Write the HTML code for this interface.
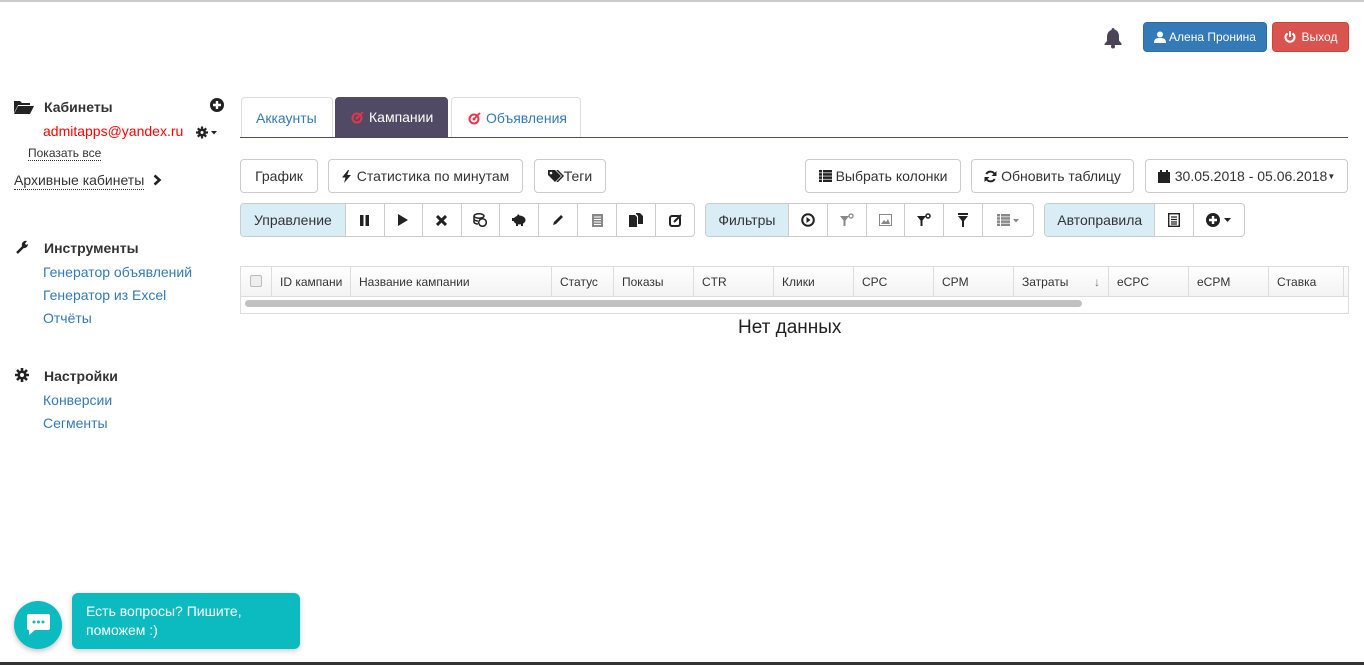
<!DOCTYPE html>
<html><head><meta charset="utf-8"><style>
*{box-sizing:border-box;margin:0;padding:0}
body{width:1364px;height:665px;background:#fff;font-family:"Liberation Sans",Arial,sans-serif;font-size:14px;color:#333;position:relative;overflow:hidden}
.a{position:absolute}
.btn{position:absolute;border:1px solid #ccc;border-radius:4px;background:#fff;display:flex;align-items:center;justify-content:center;font-size:14px;color:#333;white-space:nowrap}
.g{position:absolute;height:34px;border:1px solid #ccc;border-radius:4px;display:flex;overflow:hidden;background:#fff}
.g>div{border-left:1px solid #ccc;display:flex;align-items:center;justify-content:center;font-size:14px;color:#333}
.g>div:first-child{border-left:none}
.g>.lb{background:#d9edf7}
.th{position:absolute;top:267px;height:29px;border-left:1px solid #ddd;font-size:12px;font-weight:bold;color:#333;padding:8px 8px;white-space:nowrap;overflow:hidden;background:linear-gradient(#fff,#f3f3f3)}
.lnk{color:#337ab7;font-size:14px}
.h{font-weight:bold;font-size:14px;color:#333}
</style></head><body>
<div class="a" style="left:0;top:0;width:1364px;height:2px;background:#ccc"></div>
<div class="a" style="left:0;top:662px;width:1364px;height:3px;background:#333"></div>

<svg class="a" style="left:1103px;top:27px" width="20" height="22" viewBox="0 0 20 22"><path d="M10 1c1 0 1.5.7 1.5 1.5 3 .8 4.5 3.5 4.5 7v4l2.5 3v1.5h-17V17l2.5-3v-4c0-3.5 1.5-6.2 4.5-7C8.5 1.7 9 1 10 1z" fill="#4a4456"/><circle cx="10" cy="19.5" r="2" fill="#4a4456"/></svg>
<div class="btn" style="left:1143px;top:22px;width:124px;height:30px;background:#337ab7;border-color:#2e6da4;color:#fff;font-size:12px">
<svg width="12" height="12" viewBox="0 0 12 12" style="margin-right:3px"><circle cx="6" cy="3.5" r="3" fill="#fff"/><path d="M0 12c0-4 2-5 6-5s6 1 6 5z" fill="#fff"/></svg>Алена Пронина</div>
<div class="btn" style="left:1272px;top:22px;width:77px;height:30px;background:#d9534f;border-color:#d43f3a;color:#fff;font-size:12px">
<svg width="12" height="12" viewBox="0 0 12 12" style="margin-right:6px"><path d="M3.5 2.5A4.5 4.5 0 1 0 8.5 2.5" fill="none" stroke="#fff" stroke-width="2"/><path d="M6 0v6" stroke="#fff" stroke-width="2"/></svg>Выход</div>

<svg class="a" style="left:14px;top:100px" width="20" height="14" viewBox="0 0 20 14"><path d="M0 1h6l2 2h8v2H4L0 13z" fill="#222"/><path d="M4 6h16l-4 8H0z" fill="#222"/></svg>
<div class="a h" style="left:44px;top:99px">Кабинеты</div>
<svg class="a" style="left:210px;top:98px" width="14" height="14" viewBox="0 0 14 14"><circle cx="7" cy="7" r="7" fill="#222"/><path d="M7 3v8M3 7h8" stroke="#fff" stroke-width="2.4"/></svg>
<div class="a" style="left:43px;top:123px;color:#f00;font-size:14px">admitapps@yandex.ru</div>
<svg class="a" style="left:196px;top:126px" width="22" height="13" viewBox="0 0 22 13"><circle cx="6" cy="6.5" r="4" fill="#222"/><g stroke="#222" stroke-width="2.2"><path d="M6 0.5v12M0 6.5h12M1.8 2.3l8.4 8.4M10.2 2.3l-8.4 8.4"/></g><circle cx="6" cy="6.5" r="1.5" fill="#fff"/><path d="M15 5h6l-3 3.5z" fill="#222"/></svg>
<div class="a" style="left:28px;top:146px;font-size:12px;color:#333;border-bottom:1px dotted #333;line-height:14px">Показать все</div>
<div class="a" style="left:14px;top:172px;font-size:14px;color:#333;border-bottom:1px dotted #333;line-height:17px">Архивные кабинеты</div>
<svg class="a" style="left:153px;top:174px" width="9" height="12" viewBox="0 0 9 12"><path d="M1.5 1.5l5 4.5-5 4.5" fill="none" stroke="#222" stroke-width="2.6"/></svg>

<svg class="a" style="left:15px;top:240px" width="14" height="14" viewBox="0 0 14 14"><path d="M2 13l6-6" stroke="#222" stroke-width="2.5"/><path d="M7 6a4 4 0 0 1 5-5l-2 2.5 1 1.5 2-1A4 4 0 0 1 8 8z" fill="#222"/></svg>
<div class="a h" style="left:44px;top:240px">Инструменты</div>
<div class="a lnk" style="left:43px;top:264px">Генератор объявлений</div>
<div class="a lnk" style="left:43px;top:287px">Генератор из Excel</div>
<div class="a lnk" style="left:43px;top:310px">Отчёты</div>
<svg class="a" style="left:15px;top:368px" width="14" height="14" viewBox="0 0 14 14"><circle cx="7" cy="7" r="4.5" fill="#222"/><g stroke="#222" stroke-width="2.6"><path d="M7 0v14M0 7h14M2 2l10 10M12 2L2 12"/></g><circle cx="7" cy="7" r="2" fill="#fff"/></svg>
<div class="a h" style="left:44px;top:368px">Настройки</div>
<div class="a lnk" style="left:43px;top:392px">Конверсии</div>
<div class="a lnk" style="left:43px;top:415px">Сегменты</div>

<div class="a" style="left:240px;top:137px;width:1108px;height:1px;background:#514a65"></div>
<div class="a" style="left:241px;top:97px;width:92px;height:40px;border:1px solid #ddd;border-bottom:none;border-radius:4px 4px 0 0;color:#337ab7;padding:12px 14px">Аккаунты</div>
<div class="a" style="left:335px;top:97px;width:113px;height:41px;background:#514a65;border-radius:4px 4px 0 0;color:#fff;padding:12px 0 0 16px;display:flex"><svg width="13" height="13" viewBox="0 0 13 13" style="margin:2px 5px 0 0"><circle cx="6" cy="7" r="4.5" fill="none" stroke="#e8334a" stroke-width="2"/><circle cx="6" cy="7" r="1.5" fill="#e8334a"/><path d="M6 7l6-6" stroke="#e8334a" stroke-width="1.8"/></svg>Кампании</div>
<div class="a" style="left:451px;top:97px;width:130px;height:40px;border:1px solid #ddd;border-bottom:none;border-radius:4px 4px 0 0;color:#337ab7;padding:12px 0 0 16px;display:flex"><svg width="13" height="13" viewBox="0 0 13 13" style="margin:2px 5px 0 0"><circle cx="6" cy="7" r="4.5" fill="none" stroke="#e8334a" stroke-width="2"/><circle cx="6" cy="7" r="1.5" fill="#e8334a"/><path d="M6 7l6-6" stroke="#e8334a" stroke-width="1.8"/></svg>Объявления</div>

<div class="btn" style="left:240px;top:159px;width:78px;height:34px">График</div>
<div class="btn" style="left:328px;top:159px;width:195px;height:34px"><svg width="9" height="13" viewBox="0 0 9 13" style="margin-right:6px"><path d="M6 0L0 7.5h3.5L2 13l7-8H5.3L7 0z" fill="#222"/></svg>Статистика по минутам</div>
<div class="btn" style="left:534px;top:159px;width:72px;height:34px"><svg width="16" height="12" viewBox="0 0 16 12"><path d="M0 0h7l6 6-6 6-7-7z" fill="#222"/><circle cx="3" cy="3" r="1.3" fill="#fff"/><path d="M9 0l6 6-6 6" fill="none" stroke="#222" stroke-width="1.5"/></svg>Теги</div>
<div class="btn" style="left:805px;top:159px;width:156px;height:34px"><svg width="13" height="12" viewBox="0 0 13 12" style="margin-right:4px"><g fill="#222"><rect x="0" y="0" width="3" height="2.5"/><rect x="4" y="0" width="9" height="2.5"/><rect x="0" y="3.2" width="3" height="2.5"/><rect x="4" y="3.2" width="9" height="2.5"/><rect x="0" y="6.4" width="3" height="2.5"/><rect x="4" y="6.4" width="9" height="2.5"/><rect x="0" y="9.6" width="3" height="2.4"/><rect x="4" y="9.6" width="9" height="2.4"/></g></svg>Выбрать колонки</div>
<div class="btn" style="left:971px;top:159px;width:163px;height:34px"><svg width="13" height="13" viewBox="0 0 13 13" style="margin-right:4px"><path d="M11 5A4.8 4.8 0 0 0 2.3 4M2 8a4.8 4.8 0 0 0 8.7 1" fill="none" stroke="#222" stroke-width="2"/><path d="M12.5 1v5h-5zM0.5 12V7h5z" fill="#222"/></svg>Обновить таблицу</div>
<div class="btn" style="left:1145px;top:159px;width:203px;height:34px"><svg width="12" height="13" viewBox="0 0 12 13" style="margin-right:5px"><rect x="0" y="2" width="12" height="11" fill="#222"/><rect x="2" y="0" width="2" height="3" fill="#222"/><rect x="8" y="0" width="2" height="3" fill="#222"/></svg>30.05.2018 - 05.06.2018<span style="font-size:8px">▼</span></div>

<div class="g" style="left:240px;top:203px;width:455px">
<div class="lb" style="width:104px">Управление</div>
<div style="width:39px"><svg width="9" height="11"><rect x="0" y="0" width="3.5" height="11" fill="#222"/><rect x="5.5" y="0" width="3.5" height="11" fill="#222"/></svg></div>
<div style="width:38px"><svg width="10" height="12"><path d="M0 0l10 6-10 6z" fill="#222"/></svg></div>
<div style="width:39px"><svg width="11" height="11"><path d="M1 1l9 9M10 1l-9 9" stroke="#222" stroke-width="3"/></svg></div>
<div style="width:39px"><svg width="14" height="14" viewBox="0 0 14 14"><ellipse cx="6" cy="3" rx="5" ry="2.2" fill="none" stroke="#222" stroke-width="1.5"/><path d="M1 3v6c0 1.2 2 2 4 2M1 6c0 1.2 2 2 4 2" fill="none" stroke="#222" stroke-width="1.5"/><circle cx="9.5" cy="9.5" r="3.8" fill="#fff" stroke="#222" stroke-width="1.5"/></svg></div>
<div style="width:39px"><svg width="15" height="12" viewBox="0 0 15 12"><ellipse cx="7.5" cy="6" rx="6" ry="4.5" fill="#222"/><path d="M0 4h3v3H0zM4 9h2v3H4zM9 9h2v3H9zM6 0l2 2H5z" fill="#222"/></svg></div>
<div style="width:39px"><svg width="12" height="12"><path d="M1 11l1-3 7-7 2 2-7 7z" fill="#222"/></svg></div>
<div style="width:39px"><svg width="11" height="13"><rect width="11" height="13" fill="#888"/><path d="M2 3h7M2 5.5h7M2 8h7M2 10.5h7" stroke="#fff" stroke-width="1"/></svg></div>
<div style="width:39px"><svg width="14" height="14"><path d="M0 2h6l2 2v10H0z" fill="#222"/><path d="M7 0h4l3 3v8H9V3L7 1z" fill="#222"/></svg></div>
<div style="width:39px"><svg width="13" height="13"><rect x="1" y="2" width="10" height="10" rx="2" fill="none" stroke="#222" stroke-width="2"/><path d="M5 8l7-7" stroke="#222" stroke-width="2"/></svg></div>
</div>
<div class="g" style="left:705px;top:203px;width:329px">
<div class="lb" style="width:82px">Фильтры</div>
<div style="width:39px"><svg width="14" height="14"><circle cx="7" cy="7" r="5.8" fill="none" stroke="#222" stroke-width="2"/><path d="M5.5 4l4 3-4 3z" fill="#222"/></svg></div>
<div style="width:39px"><svg width="14" height="14"><path d="M0 3h9L5.5 7.5V13h-2V7.5z" fill="#888"/><circle cx="11" cy="3" r="2" fill="none" stroke="#888" stroke-width="1.3"/></svg></div>
<div style="width:39px"><svg width="13" height="12"><rect x="0.5" y="0.5" width="12" height="11" fill="none" stroke="#888"/><path d="M2 10l3-4 2 2 2-3 2 5z" fill="#888"/></svg></div>
<div style="width:39px"><svg width="14" height="14"><path d="M0 3h9L5.5 7.5V13h-2V7.5z" fill="#222"/><circle cx="11" cy="3" r="2" fill="none" stroke="#222" stroke-width="1.5"/></svg></div>
<div style="width:39px"><svg width="10" height="14"><rect width="10" height="2" fill="#222"/><path d="M0 3h10L6 8v6H4V8z" fill="#222"/></svg></div>
<div style="width:51px"><svg width="22" height="12"><g fill="#888"><rect width="3" height="2.5"/><rect x="4" width="9" height="2.5"/><rect y="3.2" width="3" height="2.5"/><rect x="4" y="3.2" width="9" height="2.5"/><rect y="6.4" width="3" height="2.5"/><rect x="4" y="6.4" width="9" height="2.5"/><rect y="9.6" width="3" height="2.4"/><rect x="4" y="9.6" width="9" height="2.4"/><path d="M16 5h6l-3 3.5z"/></g></svg></div>
</div>
<div class="g" style="left:1044px;top:203px;width:201px">
<div class="lb" style="width:110px">Автоправила</div>
<div style="width:39px"><svg width="12" height="14"><rect x="0.7" y="0.7" width="10.6" height="12.6" fill="none" stroke="#222" stroke-width="1.4"/><path d="M3 4h6M3 6.5h6M3 9h6M3 11h6" stroke="#222" stroke-width="1.2"/></svg></div>
<div style="width:51px"><svg width="14" height="14" viewBox="0 0 14 14"><circle cx="7" cy="7" r="7" fill="#222"/><path d="M7 3v8M3 7h8" stroke="#fff" stroke-width="2.4"/></svg><svg width="9" height="6" style="margin-left:3px"><path d="M1 1h7l-3.5 4z" fill="#222"/></svg></div>
</div>

<div class="a" style="left:240px;top:266px;width:1109px;height:48px;border:1px solid #ddd"></div>
<div class="th" style="left:241px;width:30px;border-left:none"><div style="width:12px;height:12px;border:1px solid #bbb;border-radius:2px;background:#eee;margin-left:1px"></div></div>
<div class="th" style="left:271px;width:79px;font-weight:normal">ID кампани</div>
<div class="th" style="left:350px;width:201px;font-weight:normal">Название кампании</div>
<div class="th" style="left:551px;width:62px;font-weight:normal">Статус</div>
<div class="th" style="left:613px;width:80px;font-weight:normal">Показы</div>
<div class="th" style="left:693px;width:80px;font-weight:normal">CTR</div>
<div class="th" style="left:773px;width:80px;font-weight:normal">Клики</div>
<div class="th" style="left:853px;width:80px;font-weight:normal">CPC</div>
<div class="th" style="left:933px;width:80px;font-weight:normal">CPM</div>
<div class="th" style="left:1013px;width:95px;font-weight:normal">Затраты<span style="position:absolute;right:8px;color:#777">↓</span></div>
<div class="th" style="left:1108px;width:80px;font-weight:normal">eCPC</div>
<div class="th" style="left:1188px;width:80px;font-weight:normal">eCPM</div>
<div class="th" style="left:1268px;width:75px;font-weight:normal">Ставка</div>
<div class="th" style="left:1343px;width:5px;padding:0"></div>
<div class="a" style="left:241px;top:296px;width:1107px;height:1px;background:#ddd"></div>
<div class="a" style="left:245px;top:300px;width:837px;height:7px;border-radius:4px;background:#c1c1c1"></div>
<div class="a" style="left:738px;top:317px;font-size:19px;color:#222">Нет данных</div>

<div class="a" style="left:14px;top:601px;width:48px;height:48px;border-radius:50%;background:#0bbbbf;box-shadow:0 2px 6px rgba(0,0,0,.25)"></div>
<svg class="a" style="left:27px;top:614px" width="23" height="22" viewBox="0 0 23 22"><path d="M2 0h19a2 2 0 0 1 2 2v12a2 2 0 0 1-2 2H8l-6 5v-5a2 2 0 0 1-2-2V2a2 2 0 0 1 2-2z" fill="#fff"/><circle cx="7" cy="8" r="1.5" fill="#0bbbbf"/><circle cx="11.5" cy="8" r="1.5" fill="#0bbbbf"/><circle cx="16" cy="8" r="1.5" fill="#0bbbbf"/></svg>
<div class="a" style="left:66px;top:622px;width:0;height:0;border:6px solid transparent;border-right-color:#0bbbbf"></div>
<div class="a" style="left:72px;top:593px;width:228px;height:56px;border-radius:6px;background:#0bbbbf;color:#fff;font-size:14px;line-height:19px;padding:9px 14px;box-shadow:0 2px 6px rgba(0,0,0,.2)">Есть вопросы? Пишите, поможем :)</div>
</body></html>
